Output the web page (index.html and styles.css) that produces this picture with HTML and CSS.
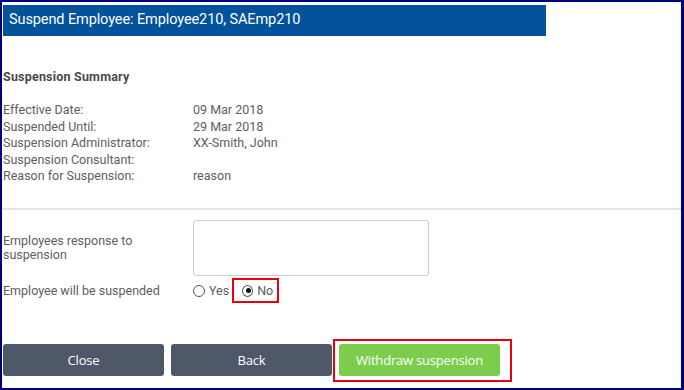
FILE: index.html
```html
<!DOCTYPE html>
<html>
<head>
<meta charset="utf-8">
<link rel="stylesheet" href="styles.css">
</head>
<body>
<div class="frame">
  <div class="title-bar">Suspend Employee: Employee210, SAEmp210</div>

  <section class="summary">
    <h2 class="summary-title">Suspension Summary</h2>
    <dl class="details">
      <dt>Effective Date:</dt><dd>09 Mar 2018</dd>
      <dt>Suspended Until:</dt><dd>29 Mar 2018</dd>
      <dt>Suspension Administrator:</dt><dd>XX-Smith, John</dd>
      <dt>Suspension Consultant:</dt><dd></dd>
      <dt>Reason for Suspension:</dt><dd>reason</dd>
    </dl>
  </section>

  <hr class="divider">

  <section class="form">
    <div class="form-row response-row">
      <label class="form-label">Employees response to suspension</label>
      <div class="textarea"></div>
    </div>
    <div class="form-row radio-row">
      <span class="form-label nowrap">Employee will be suspended</span>
      <div class="radios">
        <span class="radio-opt"><span class="radio"></span>Yes</span>
        <span class="radio-opt highlight"><span class="radio checked"></span>No</span>
      </div>
    </div>
  </section>

  <div class="actions">
    <button class="btn btn-dark">Close</button>
    <button class="btn btn-dark">Back</button>
    <span class="btn-highlight"><button class="btn btn-green">Withdraw suspension</button></span>
  </div>
</div>
</body>
</html>
```

FILE: styles.css
```css
html, body {
  margin: 0;
  padding: 0;
  background: #ffffff;
}

.frame {
  box-sizing: border-box;
  width: 684px;
  height: 390px;
  border: 2px solid #00007f;
  border-right-width: 3px;
  font-family: Roboto, "Liberation Sans", sans-serif;
  font-size: 12.5px;
  color: #5e5e5e;
  display: flex;
  flex-direction: column;
}

.title-bar {
  margin: 3px 0 0 1px;
  width: 543px;
  height: 31px;
  box-sizing: border-box;
  background: #02529c;
  color: #ffffff;
  font-size: 14.5px;
  line-height: 30px;
  padding-left: 6px;
  letter-spacing: -0.1px;
}

.summary {
  padding: 0 0 0 1px;
}

.summary-title {
  margin: 33px 0 0 0;
  font-size: 12.5px;
  font-weight: 700;
  color: #4a4a4a;
  line-height: 16px;
  letter-spacing: 0.2px;
}

.details {
  margin: 17px 0 0 0;
  display: grid;
  grid-template-columns: 190px 1fr;
  line-height: 16.6px;
}

.details dt, .details dd {
  margin: 0;
}

.divider {
  margin: 23px 0 0 0;
  border: 0;
  height: 2px;
  background: #e6e6e6;
}

.form {
  padding: 10px 0 0 1px;
  display: flex;
  flex-direction: column;
}

.form-row {
  display: grid;
  grid-template-columns: 190px 1fr;
  align-items: center;
}

.form-label {
  line-height: 14px;
  width: 150px;
}

.form-label.nowrap {
  white-space: nowrap;
}

.textarea {
  width: 234px;
  height: 54px;
  border: 1px solid #cccccc;
  border-radius: 3px;
}

.radio-row {
  margin-top: 2px;
  height: 26px;
}

.radios {
  display: flex;
  align-items: center;
}

.radio-opt {
  display: inline-flex;
  align-items: center;
  gap: 4px;
  height: 21px;
}

.radio-opt.highlight {
  margin-left: 3px;
  border: 2px solid #e8000b;
  padding: 0 4px 0 8px;
  width: 31px;
}

.radio {
  width: 10px;
  height: 10px;
  border: 1px solid #555555;
  border-radius: 50%;
  background: #ffffff;
  position: relative;
}

.radio.checked::after {
  content: "";
  position: absolute;
  left: 2.5px;
  top: 2.5px;
  width: 5px;
  height: 5px;
  border-radius: 50%;
  background: #111111;
}

.actions {
  margin-top: auto;
  margin-bottom: 6px;
  margin-left: 1px;
  display: flex;
  align-items: flex-start;
  gap: 7px;
}

.actions > .btn {
  margin-top: 5px;
}

.btn {
  width: 161px;
  height: 32px;
  border: 0;
  border-radius: 3px;
  color: #ffffff;
  font-family: "Open Sans", "Liberation Sans", sans-serif;
  font-size: 13px;
  letter-spacing: -0.2px;
  padding: 0;
}

.btn-dark {
  background: #4f5868;
}

.btn-green {
  background: #7ccd4e;
}

.btn-highlight {
  border: 2px solid #e8000b;
  padding: 3px 10px 4px 4px;
  margin-left: -6px;
  display: inline-flex;
}
```
